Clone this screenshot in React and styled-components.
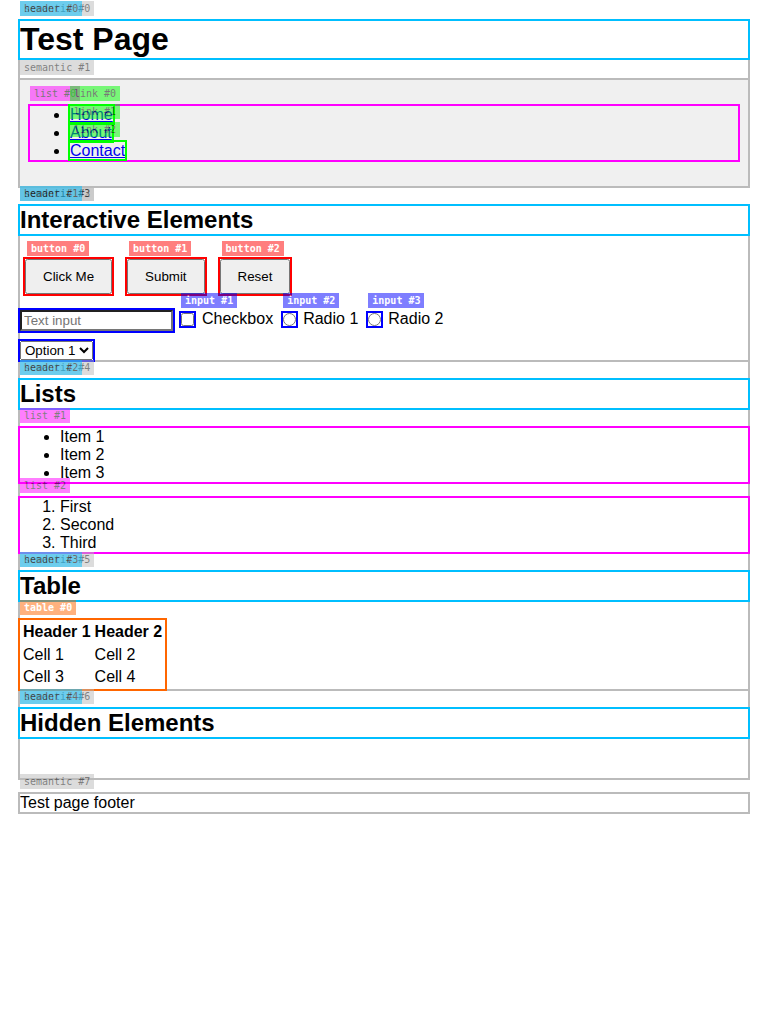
import React from 'react';
import styled, { createGlobalStyle } from 'styled-components';

const tones = {
  semantic: '#bbbbbb',
  header: '#00bfff',
  list: '#ff00ff',
  link: '#00ff00',
  button: '#ff0000',
  input: '#0000ff',
  table: '#ff6600',
};

const GlobalStyle = createGlobalStyle`
  body {
    margin: 0;
    font-family: Arial, "Liberation Sans", sans-serif;
    font-size: 16px;
    line-height: 18px;
    color: #000;
    background: #fff;
  }
`;

const Page = styled.div`
  display: flex;
  flex-direction: column;
  padding: 21px 20px;
`;

const Tag = styled.span`
  position: absolute;
  top: -20px;
  left: 0;
  z-index: 10;
  padding: 2px 4px;
  background: ${(p) => tones[p.$kind]};
  color: ${(p) => (p.$strong ? '#fff' : '#000')};
  font: ${(p) => (p.$strong ? 'bold' : 'normal')} 10px/11px "DejaVu Sans Mono", monospace;
  white-space: nowrap;
  opacity: 0.5;
  pointer-events: none;
`;

const PageHeader = styled.header`
  position: relative;
  display: flex;
  flex-direction: column;
  gap: 22px;
  margin-bottom: 20px;
  outline: 2px solid ${tones.semantic};
`;

const Nav = styled.nav`
  position: relative;
  padding: 26px 10px;
  background: #f0f0f0;
  outline: 2px solid ${tones.semantic};
`;

const Main = styled.main`
  position: relative;
  display: flex;
  flex-direction: column;
  gap: 20px;
  outline: 2px solid ${tones.semantic};
`;

const Section = styled.section`
  position: relative;
  display: flex;
  flex-direction: column;
  gap: 20px;
  outline: 2px solid ${tones.semantic};
`;

const Title = styled.h1`
  position: relative;
  margin: 0;
  font-size: 32px;
  line-height: 37px;
  outline: 2px solid ${tones.header};
`;

const Heading = styled.h2`
  position: relative;
  margin: 0;
  font-size: 24px;
  line-height: 28px;
  outline: 2px solid ${tones.header};
`;

const Lists = styled.div`
  display: flex;
  flex-direction: column;
  gap: 16px;
`;

const List = styled.ul`
  position: relative;
  margin: 0;
  padding-left: 40px;
  outline: 2px solid ${tones.list};
`;

const Link = styled.a`
  position: relative;
  outline: 2px solid ${tones.link};
`;

const Controls = styled.form`
  display: flex;
  flex-direction: column;
  gap: 10px;
`;

const ButtonRow = styled.div`
  display: flex;
  gap: 15px;
  padding: 5px 5px 6px;
`;

const Button = styled.button`
  position: relative;
  padding: 8px 16px;
  outline: 2px solid ${tones.button};
`;

const FieldRow = styled.div`
  display: flex;
  align-items: flex-start;
  gap: 8px;
`;

const TextInput = styled.input`
  position: relative;
  box-sizing: border-box;
  width: 153px;
  height: 21px;
  padding: 1px 2px;
  border: 2px inset #767676;
  outline: 2px solid ${tones.input};
`;

const Choices = styled.div`
  display: flex;
  gap: 10px;
`;

const ChoiceItem = styled.div`
  display: flex;
  align-items: center;
  gap: ${(p) => (p.$round ? '7px' : '8px')};
`;

const ChoiceBox = styled.span`
  position: relative;
  display: flex;
`;

const Choice = styled.input`
  width: 13px;
  height: 13px;
  margin: 0;
  outline: 2px solid ${tones.input};
`;

const Select = styled.select`
  position: relative;
  outline: 2px solid ${tones.input};
`;

const TableFrame = styled.div`
  position: relative;
  align-self: flex-start;
  outline: 2px solid ${tones.table};
`;

const Table = styled.table`
  th {
    padding: 1px 1px 2px;
  }
`;

const HiddenArea = styled.div`
  height: 21px;
`;

const Footer = styled.footer`
  position: relative;
  margin-top: 16px;
  outline: 2px solid ${tones.semantic};
`;

function Badge({ kind, n }) {
  const strong = ['button', 'input', 'table'].includes(kind);
  return <Tag aria-hidden="true" $kind={kind} $strong={strong}>{`${kind} #${n}`}</Tag>;
}

function Option({ id, type, n, children }) {
  return (
    <ChoiceItem $round={type === 'radio'}>
      <ChoiceBox>
        <Choice id={id} type={type} name={type} />
        <Badge kind="input" n={n} />
      </ChoiceBox>
      <label htmlFor={id}>{children}</label>
    </ChoiceItem>
  );
}

export default function App() {
  return (
    <Page>
      <GlobalStyle />
      <PageHeader>
        <Badge kind="semantic" n={0} />
        <Title><Badge kind="header" n={0} />Test Page</Title>
        <Nav>
          <Badge kind="semantic" n={1} />
          <List>
            <Badge kind="list" n={0} />
            {['Home', 'About', 'Contact'].map((name, i) => (
              <li key={name}>
                <Link href={`#${name.toLowerCase()}`}><Badge kind="link" n={i} />{name}</Link>
              </li>
            ))}
          </List>
        </Nav>
      </PageHeader>

      <Main>
        <Badge kind="semantic" n={2} />
        <Section>
          <Badge kind="semantic" n={3} />
          <Heading><Badge kind="header" n={1} />Interactive Elements</Heading>
          <Controls>
            <ButtonRow>
              {['Click Me', 'Submit', 'Reset'].map((name, i) => (
                <Button type="button" key={name}><Badge kind="button" n={i} />{name}</Button>
              ))}
            </ButtonRow>
            <FieldRow>
              <TextInput type="text" placeholder="Text input" aria-label="Text input" />
              <Choices>
                <Option id="check" type="checkbox" n={1}>Checkbox</Option>
                <Option id="radio-1" type="radio" n={2}>Radio 1</Option>
                <Option id="radio-2" type="radio" n={3}>Radio 2</Option>
              </Choices>
            </FieldRow>
            <FieldRow>
              <Select aria-label="Option">
                <option>Option 1</option>
                <option>Option 2</option>
              </Select>
            </FieldRow>
          </Controls>
        </Section>

        <Section>
          <Badge kind="semantic" n={4} />
          <Heading><Badge kind="header" n={2} />Lists</Heading>
          <Lists>
            <List>
              <Badge kind="list" n={1} />
              <li>Item 1</li>
              <li>Item 2</li>
              <li>Item 3</li>
            </List>
            <List as="ol">
              <Badge kind="list" n={2} />
              <li>First</li>
              <li>Second</li>
              <li>Third</li>
            </List>
          </Lists>
        </Section>

        <Section>
          <Badge kind="semantic" n={5} />
          <Heading><Badge kind="header" n={3} />Table</Heading>
          <TableFrame>
            <Badge kind="table" n={0} />
            <Table>
              <thead>
                <tr><th>Header 1</th><th>Header 2</th></tr>
              </thead>
              <tbody>
                <tr><td>Cell 1</td><td>Cell 2</td></tr>
                <tr><td>Cell 3</td><td>Cell 4</td></tr>
              </tbody>
            </Table>
          </TableFrame>
        </Section>

        <Section>
          <Badge kind="semantic" n={6} />
          <Heading><Badge kind="header" n={4} />Hidden Elements</Heading>
          <HiddenArea />
        </Section>
      </Main>

      <Footer><Badge kind="semantic" n={7} />Test page footer</Footer>
    </Page>
  );
}
